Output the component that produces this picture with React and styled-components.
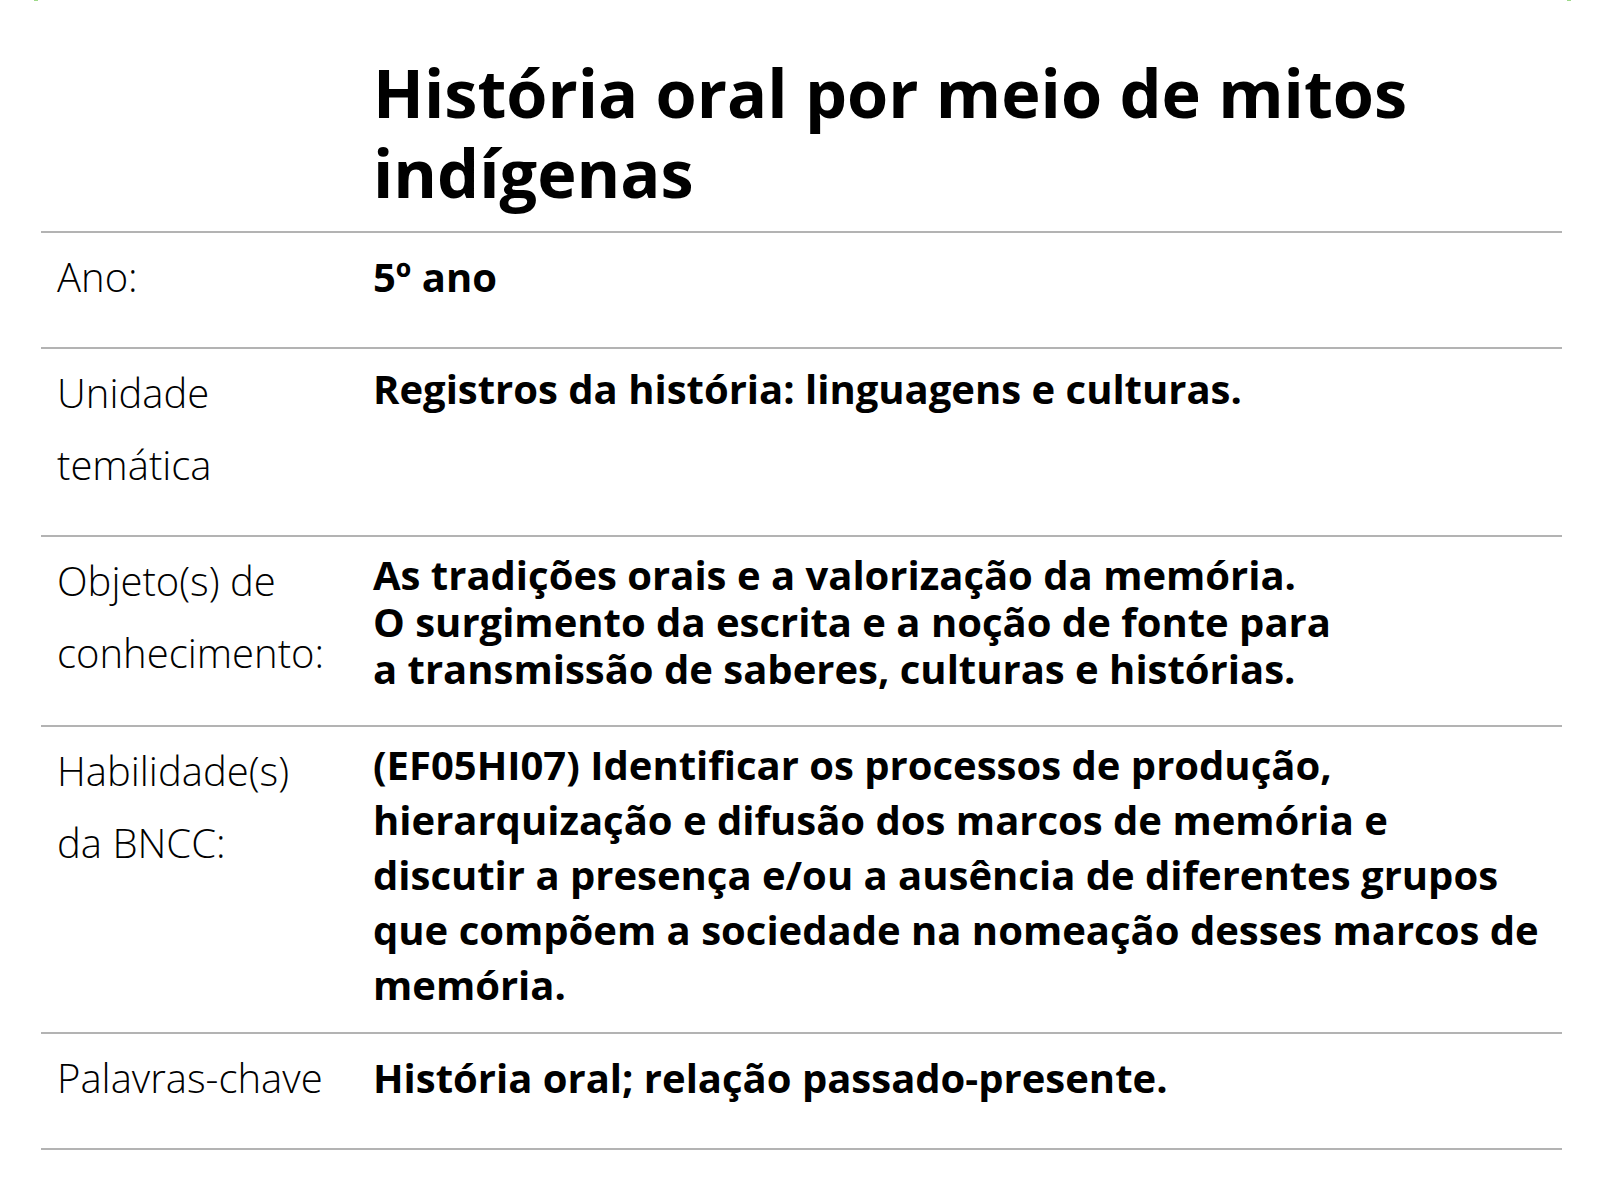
import React from "react";
import styled, { createGlobalStyle } from "styled-components";

const Global = createGlobalStyle`
  html, body { margin: 0; padding: 0; background: #fff; }
  body { font-family: "Open Sans", "Noto Sans", sans-serif; color: #000; }
`;

const Page = styled.div`
  width: 1600px;
  height: 1200px;
  box-sizing: border-box;
  padding: 53px 38px 0 41px;
  position: relative;
`;

const Grid = styled.div`
  display: grid;
  grid-template-columns: 332px 1fr;
`;

const Title = styled.h1`
  grid-column: 2;
  margin: 0 0 18px 0;
  font-family: "Open Sans", sans-serif;
  font-weight: 700;
  font-size: 66.6px;
  line-height: 80px;
`;

const Row = styled.div`
  display: contents;
`;

const Cell = styled.div`
  border-top: 2px solid #b3b3b3;
  padding: 12px 16px 18px 16px;
  ${(p) => p.$last && "border-bottom: 2px solid #b3b3b3;"}
`;

const Label = styled(Cell)`
  font-family: "Open Sans", sans-serif;
  font-weight: 300;
  font-size: 40px;
  line-height: 72px;
  padding-top: 8px;
  padding-bottom: 34px;
`;

const Value = styled(Cell)`
  font-family: "Open Sans", sans-serif;
  font-weight: 700;
  font-size: 40px;
  line-height: ${(p) => p.$lh || 55}px;
  padding-left: 0;
  padding-top: ${(p) => p.$pt ?? 10}px;
  padding-bottom: ${(p) => p.$pb ?? 20}px;
`;

const Line = styled.span`
  display: block;
  white-space: nowrap;
`;

const rows = [
  { label: ["Ano:"], value: ["5º ano"], pt: 16 },
  { label: ["Unidade", "temática"], value: ["Registros da história: linguagens e culturas."], pt: 12 },
  {
    label: ["Objeto(s) de", "conhecimento:"],
    value: [
      "As tradições orais e a valorização da memória.",
      "O surgimento da escrita e a noção de fonte para",
      "a transmissão de saberes, culturas e histórias.",
    ],
    lh: 47,
    pt: 14,
    pb: 33,
  },
  {
    label: ["Habilidade(s)", "da BNCC:"],
    value: [
      "(EF05HI07) Identificar os processos de produção,",
      "hierarquização e difusão dos marcos de memória e",
      "discutir a presença e/ou a ausência de diferentes grupos",
      "que compõem a sociedade na nomeação desses marcos de",
      "memória.",
    ],
  },
  { label: ["Palavras-chave"], value: ["História oral; relação passado-presente."], pt: 16 },
];

const Mark = styled.span`
  position: absolute;
  top: 0;
  left: ${(p) => p.$x}px;
  width: 4px;
  height: 1px;
  background: #9ed98a;
`;

export default function App() {
  return (
    <>
      <Global />
      <Page>
        <Mark $x={34} />
        <Mark $x={1567} />
        <Grid>
          <Title>História oral por meio de mitos indígenas</Title>
          {rows.map((r, i) => (
            <Row key={i}>
              <Label $last={i === rows.length - 1}>
                {r.label.map((l, j) => (
                  <Line key={j}>{l}</Line>
                ))}
              </Label>
              <Value $last={i === rows.length - 1} $lh={r.lh} $pt={r.pt} $pb={r.pb}>
                {r.value.map((l, j) => (
                  <Line key={j}>{l}</Line>
                ))}
              </Value>
            </Row>
          ))}
        </Grid>
      </Page>
    </>
  );
}
